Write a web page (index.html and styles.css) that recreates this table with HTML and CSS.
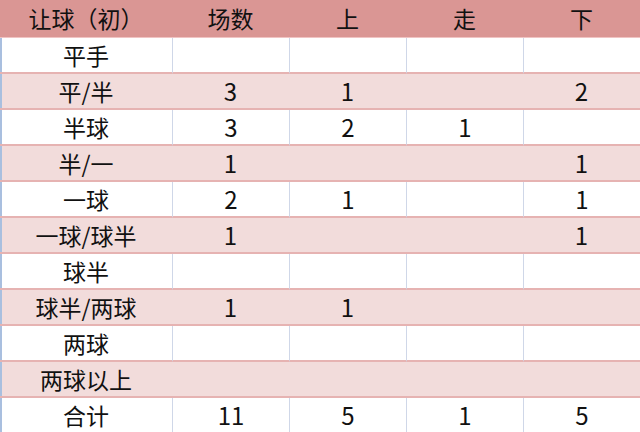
FILE: index.html
```html
<!DOCTYPE html>
<html lang="zh">
<head>
<meta charset="utf-8">
<link rel="stylesheet" href="styles.css">
</head>
<body>
<table class="stats">
  <colgroup>
    <col class="c-first"><col class="c-num"><col class="c-num"><col class="c-num"><col class="c-num">
  </colgroup>
  <thead>
    <tr><th>让球（初）</th><th>场数</th><th>上</th><th>走</th><th>下</th></tr>
  </thead>
  <tbody>
    <tr class="plain"><td>平手</td><td></td><td></td><td></td><td></td></tr>
    <tr class="band"><td>平/半</td><td>3</td><td>1</td><td></td><td>2</td></tr>
    <tr class="plain"><td>半球</td><td>3</td><td>2</td><td>1</td><td></td></tr>
    <tr class="band"><td>半/一</td><td>1</td><td></td><td></td><td>1</td></tr>
    <tr class="plain"><td>一球</td><td>2</td><td>1</td><td></td><td>1</td></tr>
    <tr class="band"><td>一球/球半</td><td>1</td><td></td><td></td><td>1</td></tr>
    <tr class="plain"><td>球半</td><td></td><td></td><td></td><td></td></tr>
    <tr class="band"><td>球半/两球</td><td>1</td><td>1</td><td></td><td></td></tr>
    <tr class="plain"><td>两球</td><td></td><td></td><td></td><td></td></tr>
    <tr class="band"><td>两球以上</td><td></td><td></td><td></td><td></td></tr>
    <tr class="plain"><td>合计</td><td>11</td><td>5</td><td>1</td><td>5</td></tr>
  </tbody>
</table>
</body>
</html>
```
FILE: styles.css
```css
html, body {
  margin: 0;
  padding: 0;
  background: #ffffff;
}
body {
  width: 640px;
  height: 432px;
  overflow: hidden;
  font-family: "Noto Sans CJK SC", "Noto Sans", sans-serif;
  color: #111111;
}
.stats {
  width: 640px;
  table-layout: fixed;
  border-collapse: separate;
  border-spacing: 0;
  font-size: 23px;
}
.c-first { width: 172px; }
.c-num { width: 117px; }
.stats th {
  height: 37px;
  padding: 0;
  background: #da9694;
  border-bottom: 1px solid #f0c4c3;
  font-weight: normal;
  text-align: center;
  vertical-align: middle;
  line-height: 1;
}
.stats td {
  height: 34px;
  padding: 0;
  text-align: center;
  vertical-align: middle;
  line-height: 1;
  border-bottom: 2px solid #e6b3b2;
}
.stats td + td {
  font-size: 24px;
}
.stats td:first-child {
  box-shadow: inset 2px 0 #a9bfdf;
}
.plain td + td {
  border-left: 1px solid #cfd7e8;
}
.band td {
  background: #f2dcdb;
}
```
